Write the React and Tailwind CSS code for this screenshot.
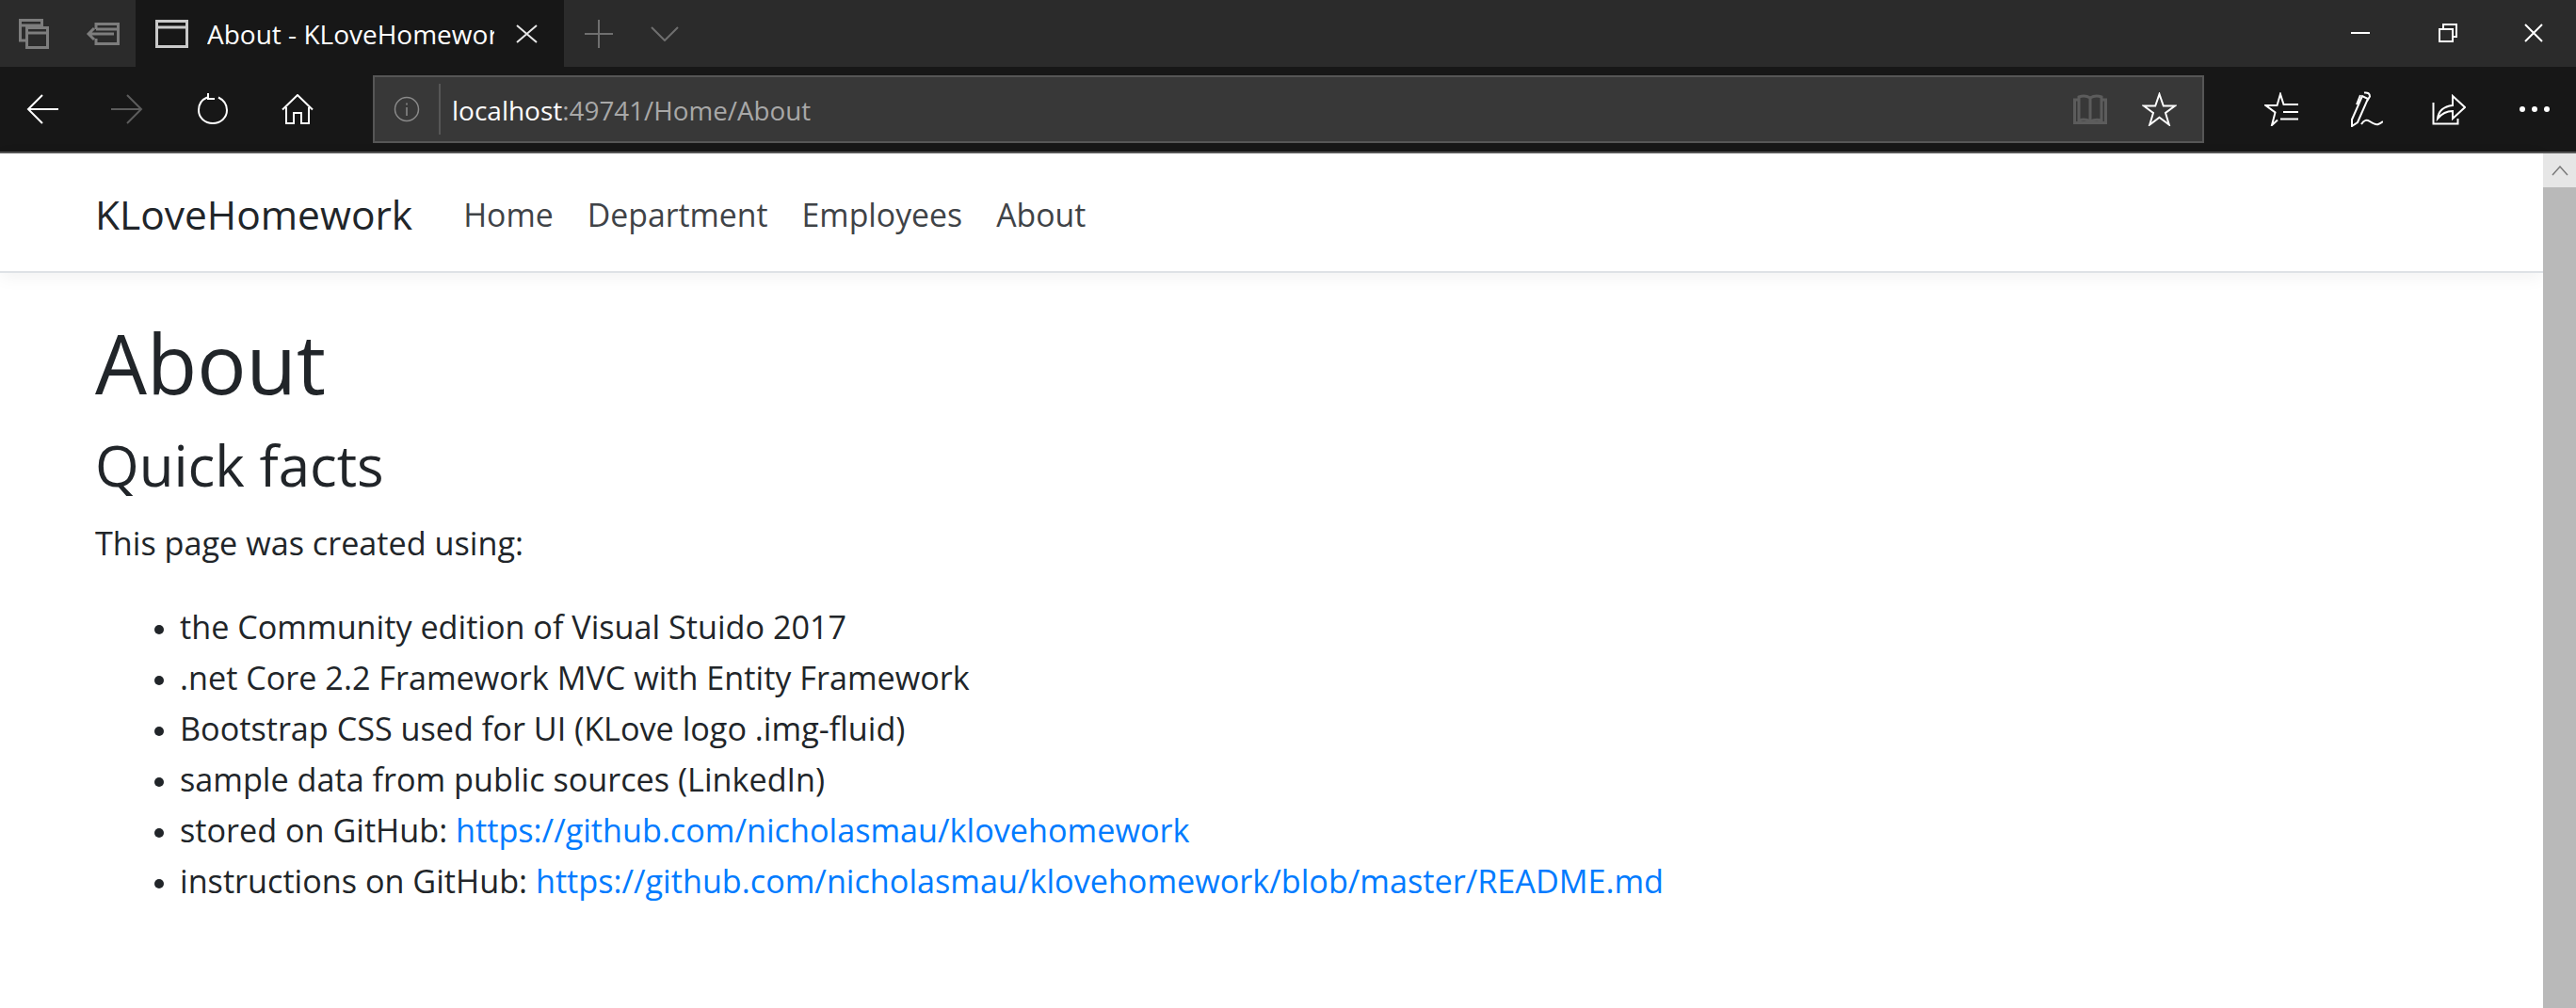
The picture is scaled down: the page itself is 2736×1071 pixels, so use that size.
const font = "font-['Open_Sans','Noto_Sans',sans-serif]";

function Ico({ className = '', w = 30, h = 30, sw = 2, children }) {
  return (
    <svg width={w} height={h} viewBox={`0 0 ${w} ${h}`} fill="none" stroke="currentColor" strokeWidth={sw} className={`flex-none ${className}`}>
      {children}
    </svg>
  );
}

const items = [
  'the Community edition of Visual Stuido 2017',
  '.net Core 2.2 Framework MVC with Entity Framework',
  'Bootstrap CSS used for UI (KLove logo .img-fluid)',
  'sample data from public sources (LinkedIn)',
];

export default function App() {
  return (
    <div className={`flex flex-col h-screen w-full overflow-hidden bg-white ${font}`}>
      {/* tab strip */}
      <div className="flex-none flex items-stretch h-[71px] bg-[#2b2b2b] text-white">
        <div className="flex-none flex items-center w-[144px] pl-[20px] text-[#7d7d7d]">
          <Ico w={32} h={32} sw={3}>
            <path d="M7 23H1.5V1.5h23V9M1.5 7h23" />
            <path d="M8.5 9.5h22v21h-22zM8.5 15h22" />
          </Ico>
          <Ico w={36} h={24} sw={3} className="ml-[39px]">
            <path d="M11 7V1.5h23.5v21H11V17M11 7h23.5" />
            <path d="M30 12H3M9 6l-6 6 6 6" />
          </Ico>
        </div>
        <div className="flex-none flex items-center w-[455px] bg-[#171717] pl-[21px]">
          <Ico w={35} h={30} sw={3} className="text-[#c9c9c9]">
            <path d="M1.5 1.5h32v27h-32zM1.5 8h32" />
          </Ico>
          <span className="ml-[20px] w-[305px] overflow-hidden whitespace-nowrap text-[28px] leading-[38px] text-white">About - KLoveHomework</span>
          <Ico w={23} h={20} className="ml-[23px] text-[#e8e8e8]">
            <path d="M1 1l21 18M22 1L1 19" />
          </Ico>
        </div>
        <div className="flex items-center pl-[22px] text-[#6f6f6f] flex-1">
          <Ico w={30} h={30}>
            <path d="M15 0v30M0 15h30" />
          </Ico>
          <Ico w={30} h={16} className="ml-[40px]">
            <path d="M1 1l14 14L29 1" />
          </Ico>
        </div>
        <div className="flex items-center text-white pb-[1px]">
          <Ico w={20} h={4}><path d="M0 2h20" /></Ico>
          <Ico w={20} h={20} className="ml-[73px]">
            <path d="M5 5V1h14v13h-4M1 6h14v13H1z" />
          </Ico>
          <Ico w={20} h={20} className="ml-[71px] mr-[35px]"><path d="M1 1l18 18M19 1L1 19" /></Ico>
        </div>
      </div>

      {/* toolbar */}
      <div className="flex-none flex items-center h-[92px] bg-[#171717] border-b-2 border-[#565656] text-white">
        <div className="flex-none flex items-center w-[396px] pl-[28px]">
          <Ico w={34} h={32}><path d="M34 16H2M17 1L2 16l15 15" /></Ico>
          <Ico w={34} h={32} className="ml-[56px] text-[#5c5c5c]"><path d="M0 16h32M17 1l15 15-15 15" /></Ico>
          <Ico w={34} h={34} className="ml-[57px]">
            <path d="M11 4.5C5 7 2 12 2 18c0 8 6.500 14 15 14s15-6 15-14c0-6-4-11-9-13.500" />
            <path d="M12 1l0 7 7 0" transform="translate(0 -2)" />
          </Ico>
          <Ico w={34} h={32} className="ml-[56px]"><path d="M1 16.500L17 1l16 15.500M5 14v17h8v-11h8v11h8V14" /></Ico>
        </div>
        <div className="flex-none flex items-center h-[72px] w-[1945px] bg-[#383838] border-2 border-[#565656]">
          <div className="flex-none flex items-center justify-center w-[70px] h-[54px] border-r-2 border-[#565656] text-[#8a8a8a] mr-[12px]">
            <Ico w={28} h={28} sw={1.5}>
              <circle cx="14" cy="14" r="12.5" />
              <path d="M14 12v9M14 7.500v2" />
            </Ico>
          </div>
          <span className="pt-[1px] text-[28px] leading-[38px] text-white">localhost</span>
          <span className="pt-[1px] text-[27.800px] leading-[38px] text-[#a8a8a8]">:49741/Home/About</span>
          <div className="ml-auto flex items-center">
            <Ico w={36} h={32} sw={3} className="text-[#5c5c5c] mr-[37px]">
              <path d="M6 3c4-1.500 8-1.500 12 1v25c-4-2.500-8-2.500-12-1zM18 4c4-2.500 8-2.500 12-1v25c-4-1-8-1-12 1" />
              <path d="M6 6H1.500v24.500h33V6H30" />
            </Ico>
            <Ico w={37} h={36} className="mr-[27px]">
              <path d="M18.500 2l4.300 12.500H35l-10 7.500 3.800 12.500-10.300-7.700L8.200 34.500 12 22 2 14.500h12.200z" />
            </Ico>
          </div>
        </div>
        <div className="flex-1 flex items-center">
          <Ico w={36} h={36} className="ml-[64px]">
            <path d="M14 29.500L8 35l3.500-13.500L1.500 14h12L17 2l3.500 11H36M20 21h16M17 28.500h19M13 18" />
          </Ico>
          <Ico w={36} h={38} className="ml-[54px]">
            <path d="M3 30L14 5l6 3-11 25-6 4zM16 1.500c4-.500 6 1 6 4l-3 5M12 4L8 14" />
            <path d="M13 35c3-5 6-5 9-3s6 4 9 3 4-2 5-3" />
          </Ico>
          <Ico w={36} h={33} className="ml-[52px]">
            <path d="M1.500 9v22.500h26V26" />
            <path d="M6 26c1-8 7-13 16-14V2l13 12-13 12V18c-6 0-11 2-16 8z" />
          </Ico>
          <div className="flex gap-[7px] ml-[57px]">
            <div className="w-[6px] h-[6px] rounded-full bg-white" />
            <div className="w-[6px] h-[6px] rounded-full bg-white" />
            <div className="w-[6px] h-[6px] rounded-full bg-white" />
          </div>
        </div>
      </div>

      {/* page */}
      <div className="flex-1 flex min-h-0">
        <div className="flex-1 min-w-0">
          <nav className="flex items-center h-[127px] pl-[101px] pt-[5px] border-b-2 border-[#dee2e6] shadow-[0_4px_18px_rgba(0,0,0,0.06)]">
            <a className="text-[42.5px] leading-[68px] text-[#212529] mr-[54px]">KLoveHomework</a>
            <div className="flex gap-[36px] text-[33.800px] leading-[54px] text-[#3f4347]">
              <a>Home</a>
              <a>Department</a>
              <a>Employees</a>
              <a>About</a>
            </div>
          </nav>
          <main className="pl-[101px] pt-[41px] text-[#212529]">
            <h1 className="text-[87px] leading-[108px] font-normal">About</h1>
            <h2 className="mt-[17px] text-[60px] leading-[76px] font-normal">Quick facts</h2>
            <p className="mt-[18px] text-[34.200px] leading-[54px]">This page was created using:</p>
            <ul className="mt-[35px] pl-[90px] list-disc marker:text-[29px] text-[34.200px] leading-[54px]">
              {items.map((item) => <li key={item}>{item}</li>)}
              <li>stored on GitHub: <a className="text-[#007bff]">https://github.com/nicholasmau/klovehomework</a></li>
              <li>instructions on GitHub: <a className="text-[#007bff]">https://github.com/nicholasmau/klovehomework/blob/master/README.md</a></li>
            </ul>
          </main>
        </div>
        {/* scrollbar */}
        <div className="flex-none w-[35px] flex flex-col bg-[#b9b9b9]">
          <div className="h-[36px] bg-[#e6e6e6] flex items-center justify-center text-[#7a7a7a]">
            <Ico w={18} h={11} sw={1.5}><path d="M1 10L9 1l8 9" /></Ico>
          </div>
        </div>
      </div>
    </div>
  );
}
